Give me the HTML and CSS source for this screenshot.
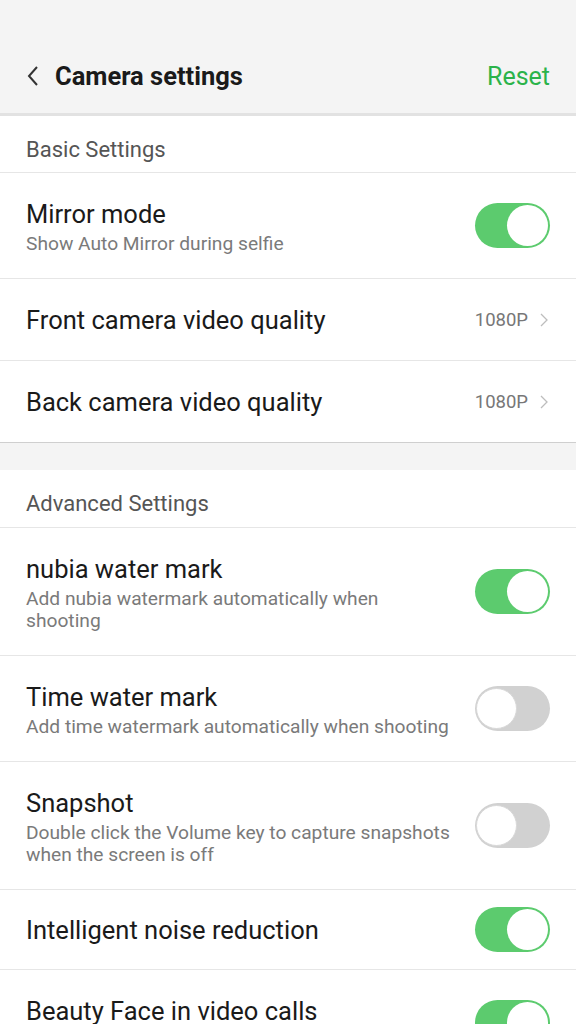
FILE: index.html
```html
<!DOCTYPE html>
<html>
<head>
<meta charset="utf-8">
<link rel="stylesheet" href="styles.css">
</head>
<body>
<div class="screen">
  <header class="topbar">
    <div class="topbar-left">
      <svg class="back" width="14" height="22" viewBox="0 0 14 22"><path d="M11 2 L3 11 L11 20" fill="none" stroke="#333" stroke-width="2"/></svg>
      <span class="title">Camera settings</span>
    </div>
    <span class="reset">Reset</span>
  </header>

  <section class="group">
    <div class="group-title">Basic Settings</div>
    <div class="row row-sub">
      <div class="text">
        <div class="label">Mirror mode</div>
        <div class="sub">Show Auto Mirror during selfie</div>
      </div>
      <div class="toggle on"><span class="knob"></span></div>
    </div>
    <div class="row row-plain">
      <div class="label">Front camera video quality</div>
      <div class="value">1080P <svg class="chev" width="8" height="14" viewBox="0 0 8 14"><path d="M1 1 L7 7 L1 13" fill="none" stroke="#bdbdbd" stroke-width="1.3"/></svg></div>
    </div>
    <div class="row row-plain last">
      <div class="label">Back camera video quality</div>
      <div class="value">1080P <svg class="chev" width="8" height="14" viewBox="0 0 8 14"><path d="M1 1 L7 7 L1 13" fill="none" stroke="#bdbdbd" stroke-width="1.3"/></svg></div>
    </div>
  </section>

  <div class="gap"></div>

  <section class="group">
    <div class="group-title">Advanced Settings</div>
    <div class="row row-sub two">
      <div class="text">
        <div class="label">nubia water mark</div>
        <div class="sub narrow">Add nubia watermark automatically when shooting</div>
      </div>
      <div class="toggle on"><span class="knob"></span></div>
    </div>
    <div class="row row-sub">
      <div class="text">
        <div class="label">Time water mark</div>
        <div class="sub">Add time watermark automatically when shooting</div>
      </div>
      <div class="toggle off"><span class="knob"></span></div>
    </div>
    <div class="row row-sub two">
      <div class="text">
        <div class="label">Snapshot</div>
        <div class="sub">Double click the Volume key to capture snapshots when the screen is off</div>
      </div>
      <div class="toggle off"><span class="knob"></span></div>
    </div>
    <div class="row row-short">
      <div class="label">Intelligent noise reduction</div>
      <div class="toggle on"><span class="knob"></span></div>
    </div>
    <div class="row row-sub">
      <div class="text">
        <div class="label">Beauty Face in video calls</div>
        <div class="sub-space"></div>
      </div>
      <div class="toggle on"><span class="knob"></span></div>
    </div>
  </section>
</div>
</body>
</html>
```

FILE: styles.css
```css
* { box-sizing: border-box; }
html, body { margin: 0; padding: 0; }
body {
  font-family: Roboto, "Noto Sans", sans-serif;
  background: #ffffff;
  color: #1a1a1a;
  width: 576px;
  height: 1024px;
  overflow: hidden;
}
.screen { width: 576px; }

.topbar {
  height: 116px;
  background: #f4f4f4;
  border-bottom: 3px solid #e2e2e2;
  display: flex;
  align-items: center;
  justify-content: space-between;
  padding: 39px 26px 0 26px;
}
.topbar-left { display: flex; align-items: center; gap: 15px; }
.back { display: block; }
.title { font-size: 25.5px; font-weight: 700; color: #1a1a1a; }
.reset { font-size: 25px; color: #2bb34a; }

.group { background: #fff; }
.group-title {
  height: 57px;
  display: flex;
  align-items: center;
  padding: 10px 26px 0 26px;
  font-size: 22px;
  color: #555;
  border-bottom: 1px solid #e6e6e6;
}
.group + .gap + .group .group-title { height: 58px; }
.row {
  display: flex;
  align-items: center;
  justify-content: space-between;
  padding: 0 26px;
  border-bottom: 1px solid #e6e6e6;
}
.row.last { border-bottom: 1px solid #cfcfcf; }
.row-plain { height: 82px; }
.row-short { height: 80px; }
.row-sub { height: 106px; }
.row-sub.two { height: 128px; }
.text { flex: 1; min-width: 0; padding-right: 9px; padding-top: 3px; }
.label { font-size: 25.5px; color: #1a1a1a; line-height: 30px; }
.sub { font-size: 19.2px; color: #7a7a7a; line-height: 22px; margin-top: 4px; }
.sub.narrow { max-width: 400px; }
.sub-space { height: 26px; }

.value {
  display: flex; align-items: center; gap: 12px;
  font-size: 18.5px; color: #777;
  padding-right: 2px;
}
.chev { display: block; }

.gap { height: 27px; background: #f4f4f4; }

.toggle {
  flex: none;
  width: 75px;
  height: 45px;
  border-radius: 23px;
  position: relative;
}
.toggle.on { background: #5ccb6e; }
.toggle.off { background: #d1d1d1; }
.knob {
  position: absolute;
  top: 2px;
  width: 41px;
  height: 41px;
  border-radius: 50%;
  background: #fff;
}
.toggle.on .knob { right: 2px; }
.toggle.off .knob { left: 1px; border: 1.5px solid #d8d8d8; }
```
